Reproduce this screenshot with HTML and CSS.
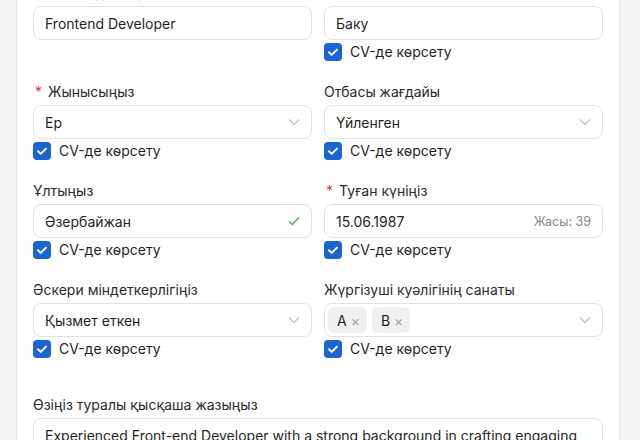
FILE: index.html
```html
<!DOCTYPE html>
<html lang="kk">
<head>
  <meta charset="UTF-8">
  <meta name="viewport" content="width=device-width, initial-scale=1.0">
  <title>Түйіндеме — жеке мәліметтер</title>
  <link rel="stylesheet" href="styles.css">
</head>
<body>
  <div class="page">
    <div class="card">
      <div class="form-grid">
        <!-- Лауазым / қала -->
        <div class="field">
          <label class="label"><span class="req">*</span>Мамандығыңыз</label>
          <div class="control"><span class="value">Frontend Developer</span></div>
        </div>
        <div class="field">
          <label class="label">Мекенжай</label>
          <div class="control"><span class="value">Баку</span></div>
          <label class="show-cv">
            <span class="check"><svg viewBox="0 0 18 18"><path d="M5 9.3l2.7 2.6L13 6.6"/></svg></span>
            CV-де көрсету
          </label>
        </div>

        <!-- Жыныс / отбасы -->
        <div class="field">
          <label class="label"><span class="req">*</span>Жынысыңыз</label>
          <div class="control select">
            <span class="value">Ер</span>
            <svg class="chevron" viewBox="0 0 12 8"><path d="M1 1.5l5 5 5-5"/></svg>
          </div>
          <label class="show-cv">
            <span class="check"><svg viewBox="0 0 18 18"><path d="M5 9.3l2.7 2.6L13 6.6"/></svg></span>
            CV-де көрсету
          </label>
        </div>
        <div class="field">
          <label class="label">Отбасы жағдайы</label>
          <div class="control select">
            <span class="value">Үйленген</span>
            <svg class="chevron" viewBox="0 0 12 8"><path d="M1 1.5l5 5 5-5"/></svg>
          </div>
          <label class="show-cv">
            <span class="check"><svg viewBox="0 0 18 18"><path d="M5 9.3l2.7 2.6L13 6.6"/></svg></span>
            CV-де көрсету
          </label>
        </div>

        <!-- Ұлт / туған күн -->
        <div class="field">
          <label class="label">Ұлтыңыз</label>
          <div class="control">
            <span class="value">Әзербайжан</span>
            <svg class="ok" viewBox="0 0 12 10"><path d="M1 5.2l3.4 3.3L11 1.5"/></svg>
          </div>
          <label class="show-cv">
            <span class="check"><svg viewBox="0 0 18 18"><path d="M5 9.3l2.7 2.6L13 6.6"/></svg></span>
            CV-де көрсету
          </label>
        </div>
        <div class="field">
          <label class="label"><span class="req">*</span>Туған күніңіз</label>
          <div class="control">
            <span class="value">15.06.1987</span>
            <span class="hint">Жасы: 39</span>
          </div>
          <label class="show-cv">
            <span class="check"><svg viewBox="0 0 18 18"><path d="M5 9.3l2.7 2.6L13 6.6"/></svg></span>
            CV-де көрсету
          </label>
        </div>

        <!-- Әскери / жүргізуші -->
        <div class="field">
          <label class="label">Әскери міндеткерлігіңіз</label>
          <div class="control select">
            <span class="value">Қызмет еткен</span>
            <svg class="chevron" viewBox="0 0 12 8"><path d="M1 1.5l5 5 5-5"/></svg>
          </div>
          <label class="show-cv">
            <span class="check"><svg viewBox="0 0 18 18"><path d="M5 9.3l2.7 2.6L13 6.6"/></svg></span>
            CV-де көрсету
          </label>
        </div>
        <div class="field">
          <label class="label">Жүргізуші куәлігінің санаты</label>
          <div class="control select tags">
            <span class="tag">A<span class="x">×</span></span>
            <span class="tag">B<span class="x">×</span></span>
            <svg class="chevron" viewBox="0 0 12 8"><path d="M1 1.5l5 5 5-5"/></svg>
          </div>
          <label class="show-cv">
            <span class="check"><svg viewBox="0 0 18 18"><path d="M5 9.3l2.7 2.6L13 6.6"/></svg></span>
            CV-де көрсету
          </label>
        </div>
      </div>

      <div class="about">
        <label class="label">Өзіңіз туралы қысқаша жазыңыз</label>
        <div class="textarea">Experienced Front-end Developer with a strong background in crafting engaging and responsive user interfaces for modern web applications.</div>
      </div>
    </div>
  </div>
</body>
</html>
```

FILE: styles.css
```css
body {
  margin: 0;
  background-color: #f4f4f5;
  font-family: Inter, "Noto Sans", sans-serif;
  font-size: 14px;
  color: #1f1f1f;
}
.page {
  padding: 0 20px 40px 16px;
}
.card {
  margin-top: -34px;
  background-color: #fff;
  border: 1px solid #e6e6e6;
  border-radius: 10px;
  padding: 16px;
}
.form-grid {
  display: grid;
  grid-template-columns: 1fr 1fr;
  column-gap: 12px;
  row-gap: 21px;
}
.field {
  display: flex;
  flex-direction: column;
}
.label {
  display: block;
  line-height: 20px;
  margin-bottom: 3px;
  color: #2b2b2b;
}
.req {
  color: #e0383e;
  margin: 0 6px 0 2px;
}
.control {
  height: 34px;
  box-sizing: border-box;
  border: 1px solid #e2e2e2;
  border-radius: 8px;
  padding: 0 11px;
  display: flex;
  align-items: center;
  gap: 8px;
}
.value {
  flex: 1;
}
.chevron {
  width: 12px;
  height: 8px;
  fill: none;
  stroke: #bdbdbd;
  stroke-width: 1.1;
}
.ok {
  width: 12px;
  height: 10px;
  fill: none;
  stroke: #4caf50;
  stroke-width: 1.4;
}
.hint {
  font-size: 12.5px;
  color: #888;
}
.tags {
  padding-left: 3px;
  gap: 5px;
}
.tags .chevron {
  margin-left: auto;
}
.tag {
  display: flex;
  align-items: center;
  height: 26px;
  padding: 0 7px 0 9px;
  background-color: #f0f0f0;
  border-radius: 6px;
  gap: 4px;
}
.tag .x {
  color: #a0a0a0;
  font-size: 14px;
}
.show-cv {
  display: flex;
  align-items: center;
  gap: 8px;
  margin-top: 3px;
  height: 18px;
  line-height: 18px;
  color: #1f1f1f;
}
.check {
  width: 18px;
  height: 18px;
  border-radius: 4px;
  background-color: #1c63d3;
  display: flex;
}
.check svg {
  width: 18px;
  height: 18px;
  fill: none;
  stroke: #fff;
  stroke-width: 2;
  stroke-linecap: round;
  stroke-linejoin: round;
}
.about {
  margin-top: 37px;
}
.textarea {
  border: 1px solid #e2e2e2;
  border-radius: 8px;
  padding: 6px 11px;
  line-height: 22px;
  height: 80px;
}
```
